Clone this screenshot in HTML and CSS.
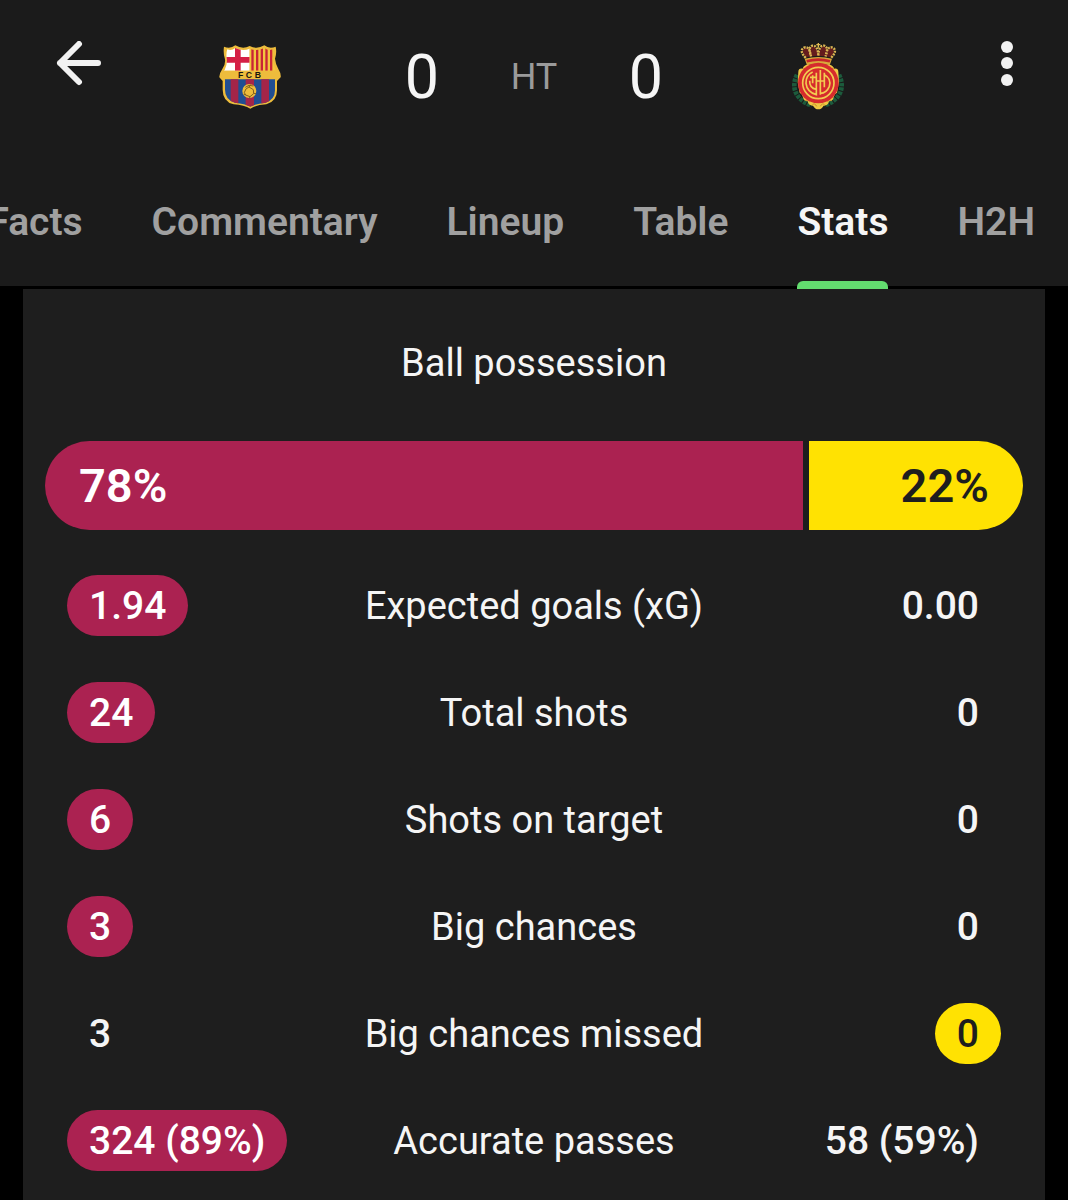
FILE: index.html
```html
<!DOCTYPE html>
<html lang="en">
<head>
<meta charset="utf-8">
<meta name="viewport" content="width=device-width, initial-scale=1">
<title>Match stats</title>
<link rel="stylesheet" href="styles.css">
</head>
<body>
<header class="header">
  <div class="scoreboard">
    <button class="icon-button" type="button" aria-label="Back">
      <svg width="46" height="46" viewBox="0 0 46 46" fill="none" stroke="#f2f2f2" stroke-width="6" stroke-linecap="round" stroke-linejoin="round"><path d="M42 22H4M23 3L4 22l19 19"/></svg>
    </button>
    <svg class="crest" width="62" height="64" viewBox="42 29 186 192" role="img" aria-label="Barcelona">
      <defs><clipPath id="shield"><path d="M67 42Q80 47 91 38Q113 49 134 40Q156 49 178 38Q190 47 203 42Q206 56 203 70Q205 88 211 104Q222 116 220 127L210 132V165Q210 193 182 202Q153 205 136 214Q121 205 90 202Q60 193 60 163V132L49 127Q48 116 59 104Q66 90 66 75Q62 56 67 42Z"/></clipPath></defs>
      <path fill="#edbc3c" d="M57 34Q76 42 91 30Q113 43 134 32Q156 43 178 30Q193 42 212 34Q216 52 210 70Q212 86 219 99Q229 116 227 126L216 137V165Q216 199 184 207Q153 209 136 220Q118 209 86 207Q53 199 53 163V137L43 126Q42 116 52 101Q62 88 60 72Q54 53 57 34Z"/>
      <g clip-path="url(#shield)">
        <path fill="#fff" d="M45 30h89v76H45z"/>
        <path fill="#d51f45" d="M90 30h17v76H90zM45 65h89v17H45z"/>
        <path fill="#f3c53f" d="M134 30h90v76h-90z"/>
        <path fill="#c92436" d="M139 30h7v76h-7zM153 30h7v76h-7zM167 30h7v76h-7zM181 30h7v76h-7zM195 30h7v76h-7z"/>
        <path fill="#edbc3c" d="M42 106h186v26H42z"/>
        <path fill="#204e93" d="M48 132h174v90H48z"/>
        <path fill="#a42549" d="M77 132h23v90H77zM122 132h25v90h-25zM169 132h23v90h-23z"/>
      </g>
      <text class="crest-text" y="128" text-anchor="middle"><tspan x="107">F</tspan><tspan x="132">C</tspan><tspan x="159">B</tspan></text>
      <circle cx="133" cy="167" r="21" fill="#efbd3b"/>
      <path d="M121 156q10-10 24-4M118 172q2-13 14-17l13 8 1 12-11 9-13-5zM132 155l6-8M146 174l7 1M134 184v5M122 179l-6-2" fill="none" stroke="#80601f" stroke-width="3"/>
    </svg>
    <div class="score">
      <span class="goals">0</span>
      <span class="phase">HT</span>
      <span class="goals">0</span>
    </div>
    <svg class="crest" width="54" height="68" viewBox="48 27 162 204" role="img" aria-label="Mallorca">
      <g fill="none" stroke="#1c5b3c" stroke-width="14" stroke-dasharray="10 3"><path d="M66 122Q48 160 70 188Q84 206 110 214"/><path d="M192 122Q210 160 188 188Q174 206 148 214"/></g>
      <path fill="#efc844" d="M95 92Q84 96 83 104Q70 102 70 114L68 145L74 176Q82 180 84 190Q86 202 98 202Q101 216 114 215Q120 226 130 226Q140 226 146 215Q159 216 162 202Q174 202 176 190Q178 180 186 176L192 145L190 114Q190 102 177 104Q176 96 165 92Z"/>
      <g fill="none" stroke="#c98f2b" stroke-width="3"><path d="M90 200q8-6 14 3M112 213q7-8 13 4M136 217q6-12 13-4M157 203q6-9 13-3M84 102q8 0 10 6M176 102q-8 0-10 6"/></g>
      <path fill="#651c1d" d="M92 70Q78 50 88 42Q98 36 107 62Q99 40 113 37Q126 38 130 62Q134 38 147 37Q161 40 153 62Q162 36 172 42Q182 50 168 70Q130 61 92 70Z"/>
      <path fill="none" stroke="#dcb653" stroke-width="7" stroke-dasharray="6 3" d="M92 72Q71 49 87 41Q103 34 108 67Q98 38 113 35Q129 34 130 66Q131 34 147 35Q162 38 152 67Q157 34 173 41Q189 49 168 72"/>
      <path d="M130 27v14M124 32h12" stroke="#e3bd52" stroke-width="4"/>
      <path d="M89 74Q130 64 171 74L164 94Q130 86 96 94Z" fill="#d8a93b"/>
      <path d="M95 82Q130 72 165 82" fill="none" stroke="#c6252a" stroke-width="8"/>
      <circle cx="130" cy="147" r="61" fill="#d62b2d"/>
      <circle cx="130" cy="147" r="47" fill="none" stroke="#f2cb50" stroke-width="5"/>
      <path d="M113 114Q92 124 93 148Q96 174 124 182V116M104 140q-1 22 20 26M136 182V108M148 116V160M148 122q22 12 15 35q-8 20-27 21M113 124v24M105 130h18M124 141h24" fill="none" stroke="#f2cb50" stroke-width="5"/>
    </svg>
    <button class="icon-button" type="button" aria-label="More options">
      <svg width="12" height="46" viewBox="0 0 12 46" fill="#f2f2f2"><circle cx="6" cy="6" r="6"/><circle cx="6" cy="22" r="6"/><circle cx="6" cy="39" r="6"/></svg>
    </button>
  </div>
  <nav class="tabs" aria-label="Match sections">
    <a class="tab" href="#facts">Facts</a>
    <a class="tab" href="#commentary">Commentary</a>
    <a class="tab" href="#lineup">Lineup</a>
    <a class="tab" href="#table">Table</a>
    <a class="tab tab-active" href="#stats" aria-current="page">Stats</a>
    <a class="tab" href="#h2h">H2H</a>
  </nav>
</header>
<main class="card" id="stats">
  <h1 class="title">Ball possession</h1>
  <div class="possession">
    <div class="share home" style="width: 78%">78%</div>
    <div class="share away" style="width: 22%">22%</div>
  </div>
  <table class="stats">
    <tbody>
      <tr><td><span class="value home">1.94</span></td><th scope="row">Expected goals (xG)</th><td><span class="value">0.00</span></td></tr>
      <tr><td><span class="value home">24</span></td><th scope="row">Total shots</th><td><span class="value">0</span></td></tr>
      <tr><td><span class="value home">6</span></td><th scope="row">Shots on target</th><td><span class="value">0</span></td></tr>
      <tr><td><span class="value home">3</span></td><th scope="row">Big chances</th><td><span class="value">0</span></td></tr>
      <tr><td><span class="value">3</span></td><th scope="row">Big chances missed</th><td><span class="value away">0</span></td></tr>
      <tr><td><span class="value home">324 (89%)</span></td><th scope="row">Accurate passes</th><td><span class="value">58 (59%)</span></td></tr>
    </tbody>
  </table>
</main>
</body>
</html>
```
FILE: styles.css
```css
* {
  box-sizing: border-box;
}

body {
  margin: 0;
  min-height: 100vh;
  display: flex;
  flex-direction: column;
  background: #000;
  color: #f5f5f5;
  font-family: Roboto, sans-serif;
  font-size: 39px;
  line-height: 46px;
}

.header {
  background: #1b1b1b;
}

.scoreboard {
  display: grid;
  grid-template-columns: 112px 1fr auto 1fr 112px;
  align-items: center;
  padding-top: 41px;
}

.icon-button {
  display: flex;
  justify-content: center;
  align-self: start;
  padding: 0 10px 0 0;
  border: 0;
  background: none;
  cursor: pointer;
}

.scoreboard .icon-button:first-child {
  padding: 0 0 0 46px;
}

.crest {
  justify-self: center;
}

.crest-text {
  font: bold 26px "Liberation Sans", sans-serif;
  fill: #17150f;
}

.score {
  display: grid;
  grid-template-columns: 68px 156px 68px;
  align-items: center;
  text-align: center;
}

.goals {
  font-size: 61px;
  line-height: 72px;
}

.phase {
  color: #9a9a9a;
  font-size: 36px;
}

.tabs {
  display: flex;
  justify-content: flex-end;
  gap: 69px;
  height: 176px;
  padding: 0 33px;
  overflow: hidden;
  box-shadow: inset 0 -3px #000;
}

.tab {
  display: flex;
  flex: none;
  padding-top: 86px;
  color: #a0a0a0;
  font-weight: 600;
  text-decoration: none;
}

.tab-active {
  position: relative;
  color: #f5f5f5;
}

.tab-active::after {
  content: "";
  position: absolute;
  right: 0;
  bottom: 0;
  left: 0;
  height: 8px;
  border-radius: 6px 6px 0 0;
  background: #63dc6f;
}

.card {
  flex: 1;
  margin: 0 23px;
  padding: 51px 22px 0;
  background: #1e1e1e;
}

.title {
  margin: 0;
  font-size: 38px;
  font-weight: 400;
  text-align: center;
}

.possession {
  display: flex;
  gap: 6px;
  margin: 55px 0 22px;
  border-radius: 45px;
  overflow: hidden;
  font-size: 47px;
  font-weight: 600;
}

.share {
  padding: 22px 34px 21px;
}

.share.away {
  text-align: right;
}

.home {
  background: #ab2251;
  color: #fff;
}

.away {
  background: #ffe202;
  color: #1e1e1e;
}

.stats {
  width: 100%;
  border-collapse: collapse;
  table-layout: fixed;
}

.stats td,
.stats th {
  height: 107px;
  padding: 0;
  vertical-align: middle;
}

.stats th {
  width: 44%;
  font-size: 38px;
  font-weight: 400;
}

.stats td {
  padding: 0 22px;
  font-weight: 500;
  white-space: nowrap;
}

.stats td:last-child {
  text-align: right;
}

.value {
  display: inline-block;
  padding: 8px 22px 7px;
  border-radius: 31px;
  vertical-align: middle;
}
```
